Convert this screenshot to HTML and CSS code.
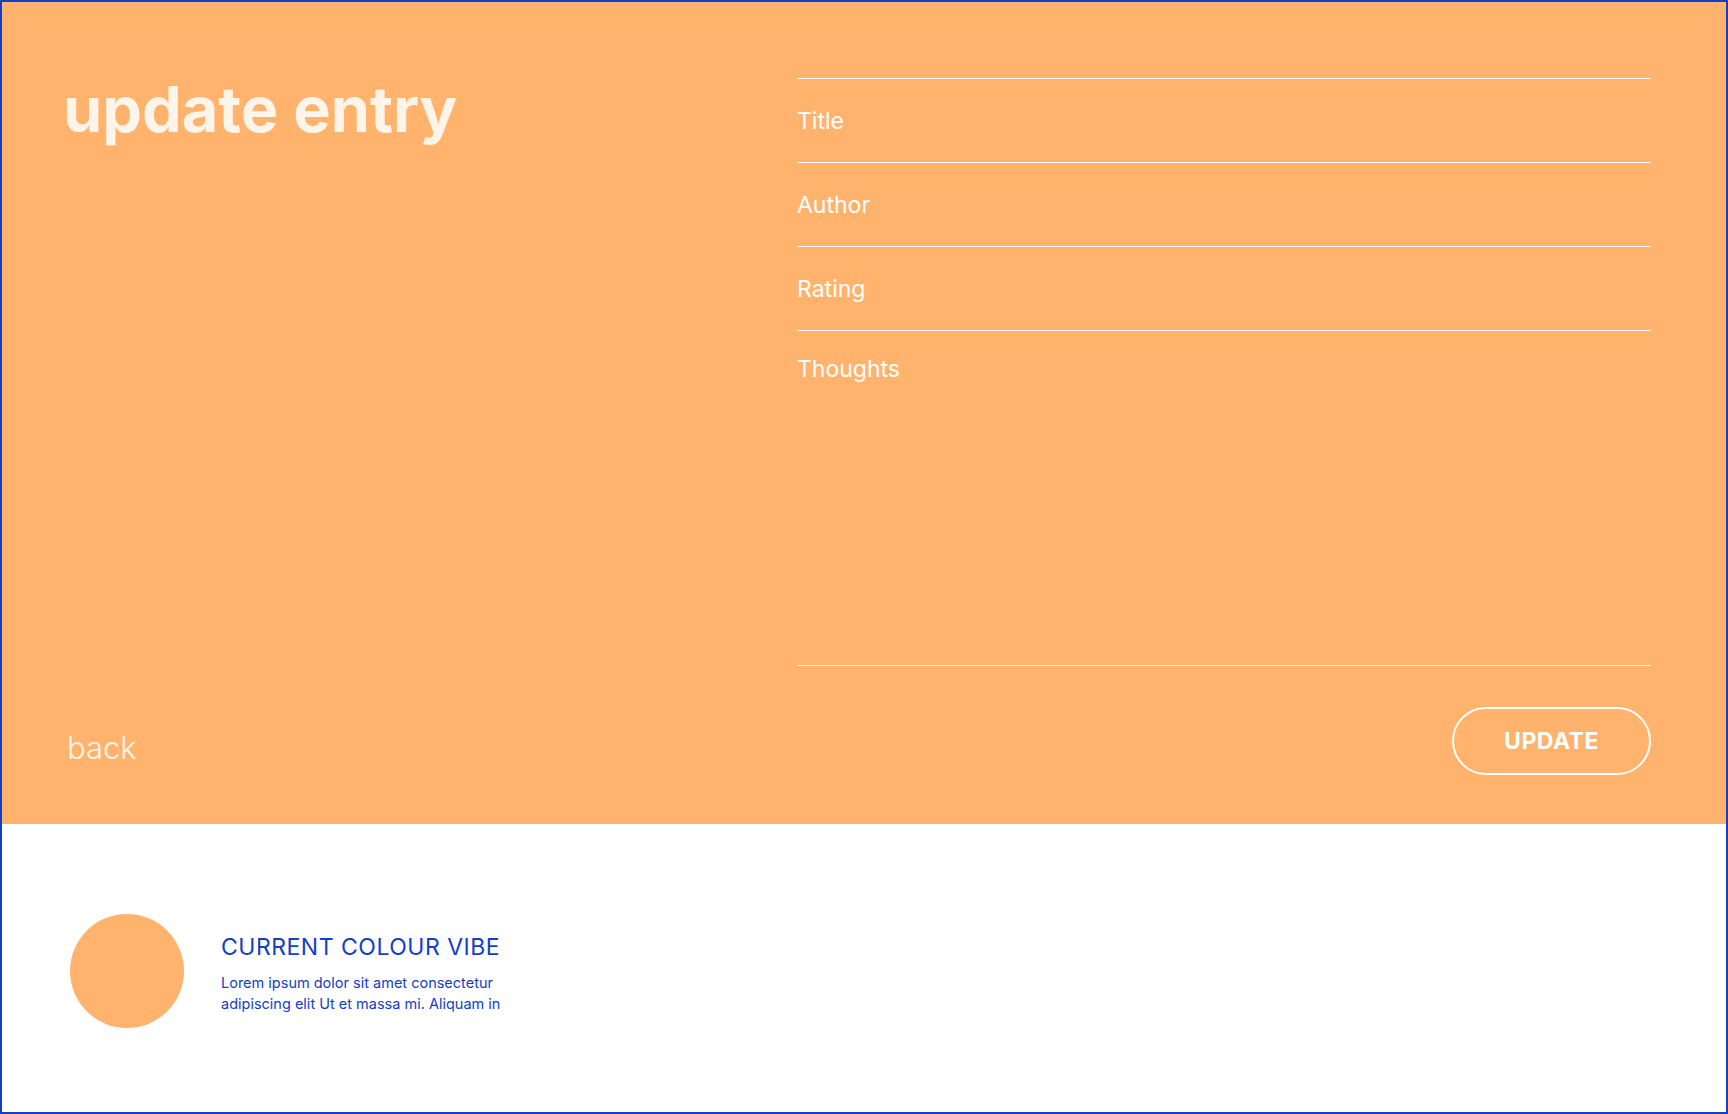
FILE: index.html
```html
<!DOCTYPE html>
<html lang="en">
<head>
<meta charset="utf-8">
<title>update entry</title>
<link rel="stylesheet" href="styles.css">
</head>
<body>
<div class="page">
  <section class="hero">
    <div class="hero-left">
      <h1 class="page-title">update entry</h1>
      <a class="back-link" href="#">back</a>
    </div>
    <form class="entry-form">
      <div class="field"><input class="field-input" type="text" placeholder="Title"></div>
      <div class="field"><input class="field-input" type="text" placeholder="Author"></div>
      <div class="field"><input class="field-input" type="text" placeholder="Rating"></div>
      <div class="field field-last"><textarea class="field-textarea" placeholder="Thoughts"></textarea></div>
      <div class="form-actions">
        <button class="update-btn" type="button">UPDATE</button>
      </div>
    </form>
  </section>
  <section class="vibe">
    <div class="vibe-swatch"></div>
    <div class="vibe-text">
      <h2 class="vibe-title">CURRENT COLOUR VIBE</h2>
      <p class="vibe-desc">Lorem ipsum dolor sit amet consectetur<br>adipiscing elit Ut et massa mi. Aliquam in</p>
    </div>
  </section>
</div>
</body>
</html>
```

FILE: styles.css
```css
* { box-sizing: border-box; }
html, body { margin: 0; padding: 0; }
body {
  font-family: "Inter", "Noto Sans", sans-serif;
  background: #ffffff;
}
.page {
  width: 1728px;
  height: 1114px;
  border: 2px solid #1340c5;
  display: flex;
  flex-direction: column;
}
.hero {
  height: 822px;
  background: #ffb36d;
  display: flex;
  padding: 76px 75px 49px 61px;
}
.hero-left {
  width: 734px;
  display: flex;
  flex-direction: column;
  justify-content: space-between;
}
.page-title {
  margin: 0;
  font-size: 63px;
  line-height: 1;
  font-weight: 700;
  letter-spacing: 0;
  color: #fdf4ea;
}
.back-link {
  font-size: 31px;
  line-height: 36px;
  font-weight: 300;
  color: #fdf4ea;
  text-decoration: none;
  margin-bottom: 9px;
  margin-left: 4px;
}
.entry-form {
  width: 854px;
  display: flex;
  flex-direction: column;
}
.field {
  border-top: 1px solid #ffffff;
}
.field-last {
  border-bottom: 1px solid #ffffff;
}
.field-input, .field-textarea {
  display: block;
  width: 100%;
  border: none;
  outline: none;
  background: transparent;
  padding: 0;
  margin: 0;
  font-family: inherit;
  font-size: 23px;
  color: #ffffff;
}
.field-input { height: 83px; }
.field-textarea {
  height: 334px;
  padding-top: 25px;
  line-height: 1.2;
  resize: none;
}
.field-input::placeholder, .field-textarea::placeholder {
  color: #ffffff;
  opacity: 1;
}
.form-actions {
  display: flex;
  justify-content: flex-end;
  margin-top: 41px;
}
.update-btn {
  width: 199px;
  height: 68px;
  border: 2px solid #ffffff;
  border-radius: 34px;
  background: transparent;
  color: #ffffff;
  font-family: inherit;
  font-size: 23px;
  font-weight: 700;
  letter-spacing: 0.5px;
  padding: 0;
}
.vibe {
  flex: 1;
  display: flex;
  align-items: center;
  padding: 6px 0 0 68px;
  gap: 37px;
}
.vibe-swatch {
  width: 114px;
  height: 114px;
  border-radius: 50%;
  background: #ffb36d;
}
.vibe-text {
  padding-top: 6px;
}
.vibe-title {
  margin: 0 0 11px;
  font-size: 23px;
  line-height: 1.2;
  font-weight: 400;
  letter-spacing: 0.5px;
  color: #1340c5;
}
.vibe-desc {
  margin: 0;
  font-size: 14.5px;
  line-height: 21px;
  color: #1340c5;
}
```
